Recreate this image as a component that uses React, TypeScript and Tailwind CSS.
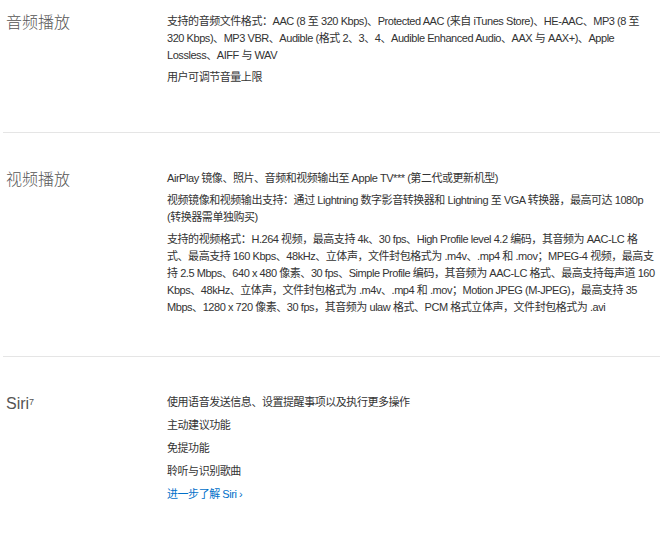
import React from 'react';

const font = { fontFamily: '"Liberation Sans Narrow", "Liberation Sans", "Noto Sans CJK SC", sans-serif' };

const Section: React.FC<{ title: React.ReactNode; pt: string; pb: string; children: React.ReactNode; border?: boolean }> = ({ title, pt, pb, children, border }) => (
  <div className={`flex ${pt} ${pb} ${border ? 'border-b border-[#e5e5e5]' : ''} ml-[3px]`}>
    <div className="w-[164px] shrink-0 pl-[3px] text-[16px] leading-[20px] text-[#555] font-light">{title}</div>
    <div className="w-[491px] text-[11px] leading-[17px] tracking-[-0.45px] text-[#333] flex flex-col gap-[5px]" style={{ fontFamily: '"Liberation Sans", "Noto Sans CJK SC", sans-serif' }}>{children}</div>
  </div>
);

export default function App() {
  return (
    <div className="w-[660px] h-[548px] bg-white overflow-hidden" style={font}>
      <Section title="音频播放" pt="pt-[13px]" pb="pb-[46px]" border>
        <p>支持的音频文件格式：AAC (8 至 320 Kbps)、Protected AAC (来自 iTunes Store)、HE-AAC、MP3 (8 至 320 Kbps)、MP3 VBR、Audible (格式 2、3、4、Audible Enhanced Audio、AAX 与 AAX+)、Apple Lossless、AIFF 与 WAV</p>
        <p>用户可调节音量上限</p>
      </Section>
      <Section title="视频播放" pt="pt-[37px]" pb="pb-[40px]" border>
        <p>AirPlay 镜像、照片、音频和视频输出至 Apple TV*** (第二代或更新机型)</p>
        <p>视频镜像和视频输出支持：通过 Lightning 数字影音转换器和 Lightning 至 VGA 转换器，最高可达 1080p (转换器需单独购买)</p>
        <p>支持的视频格式：H.264 视频，最高支持 4k、30 fps、High Profile level 4.2 编码，其音频为 AAC-LC 格式、最高支持 160 Kbps、48kHz、立体声，文件封包格式为 .m4v、.mp4 和 .mov；MPEG-4 视频，最高支持 2.5 Mbps、640 x 480 像素、30 fps、Simple Profile 编码，其音频为 AAC-LC 格式、最高支持每声道 160 Kbps、48kHz、立体声，文件封包格式为 .m4v、.mp4 和 .mov；Motion JPEG (M-JPEG)，最高支持 35 Mbps、1280 x 720 像素、30 fps，其音频为 ulaw 格式、PCM 格式立体声，文件封包格式为 .avi</p>
      </Section>
      <Section title={<span>Siri<sup className="text-[9px]">7</sup></span>} pt="pt-[37px]" pb="pb-[30px]">
        <div className="flex flex-col gap-[6px]">
          <p>使用语音发送信息、设置提醒事项以及执行更多操作</p>
          <p>主动建议功能</p>
          <p>免提功能</p>
          <p>聆听与识别歌曲</p>
          <a href="#" className="text-[#0070c9]">进一步了解 Siri ›</a>
        </div>
      </Section>
    </div>
  );
}
